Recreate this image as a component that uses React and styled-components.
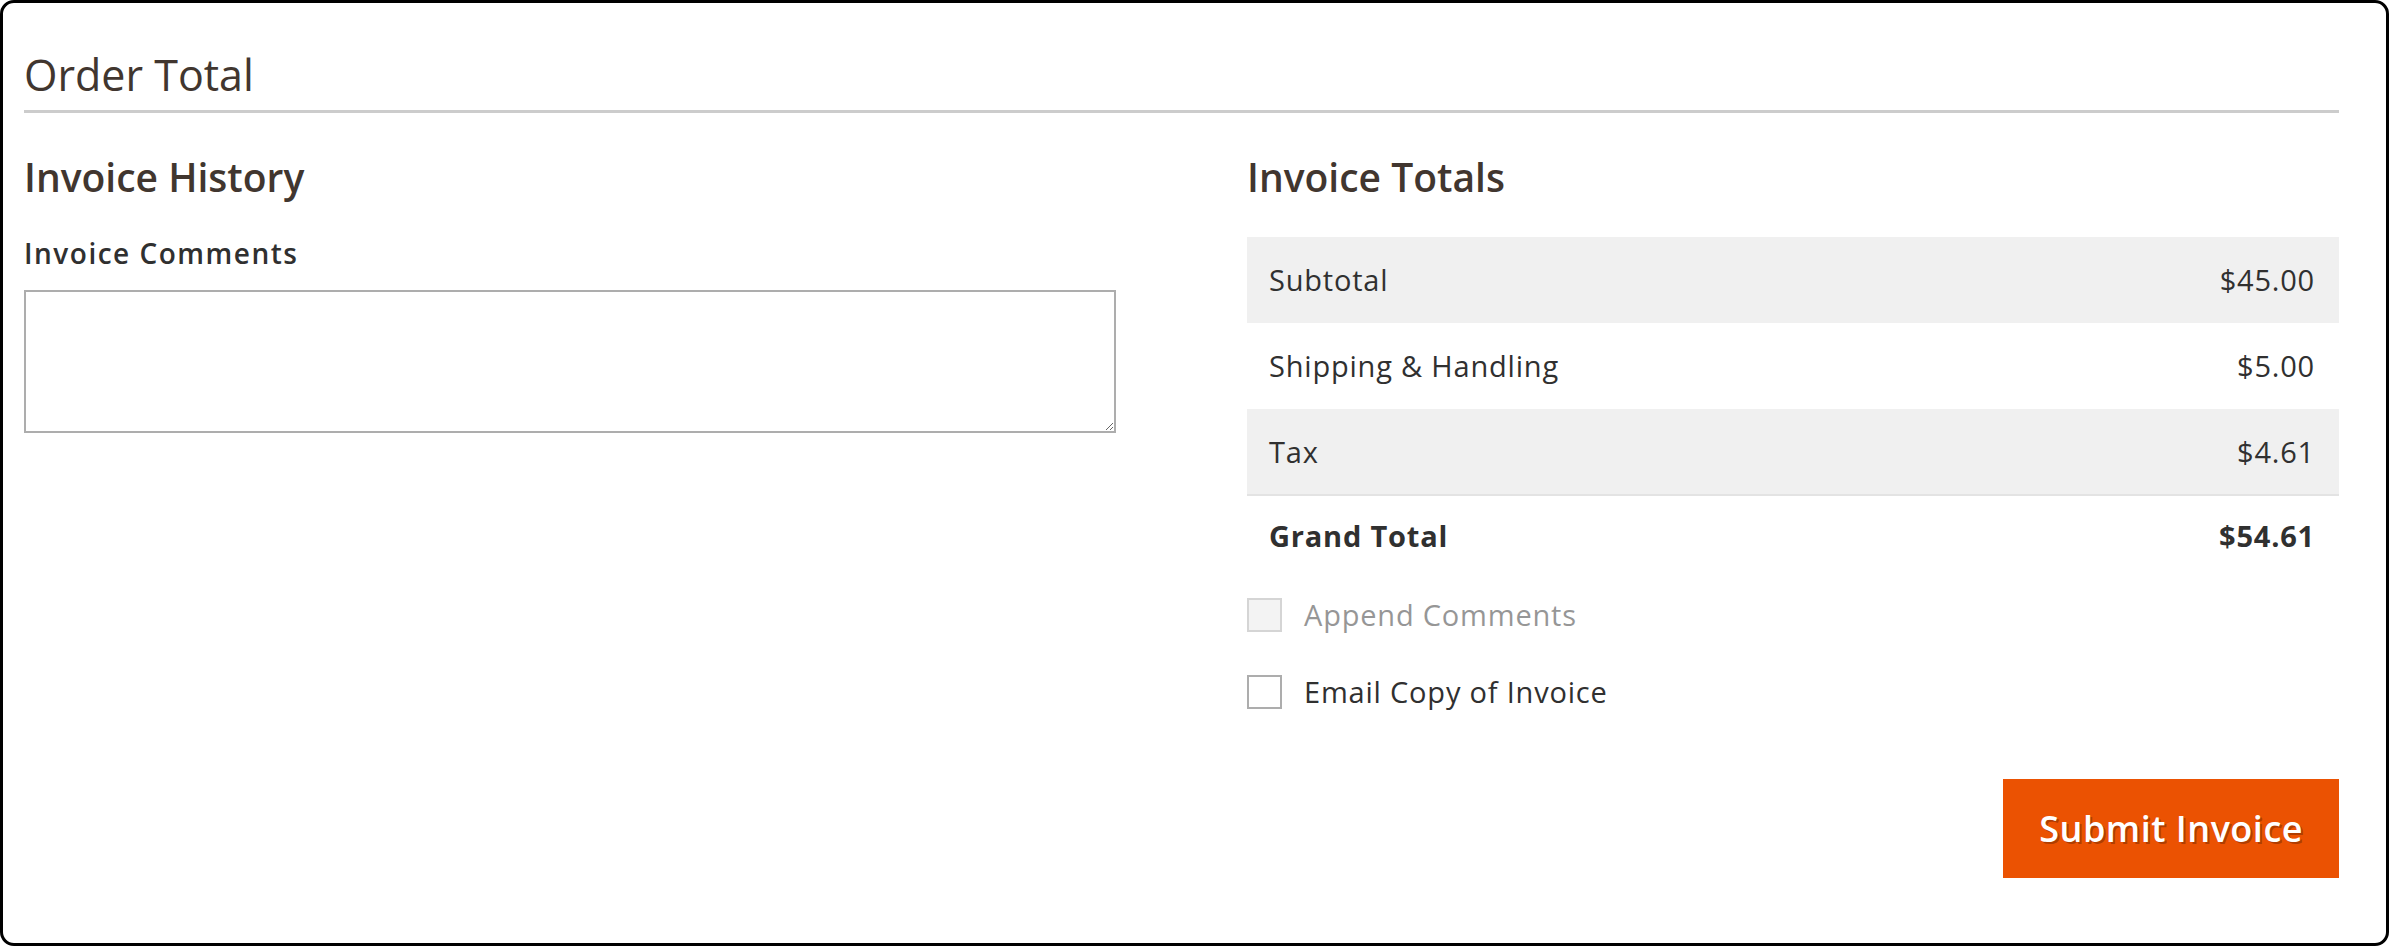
import styled, { createGlobalStyle } from 'styled-components';

const GlobalStyle = createGlobalStyle`
	html, body {
		margin: 0;
		padding: 0;
		background: #ffffff;
	}
	body {
		font-family: 'Open Sans', 'Noto Sans', 'Liberation Sans', sans-serif;
		color: #303030;
	}
	* {
		box-sizing: border-box;
	}
`;

const Frame = styled.div`
	height: 100vh;
	border: 3px solid #000000;
	border-radius: 14px;
	padding: 47px 47px 0 21px;
	overflow: hidden;
`;

const PageTitle = styled.h2`
	margin: 0;
	padding-bottom: 10px;
	border-bottom: 3px solid #cccccc;
	font-size: 43px;
	font-weight: 400;
	line-height: 50px;
	color: #41362f;
`;

const Columns = styled.div`
	display: grid;
	grid-template-columns: 1fr 1fr;
	column-gap: 131px;
	margin-top: 40px;
`;

const Column = styled.div`
	display: flex;
	flex-direction: column;
`;

const SectionTitle = styled.h3`
	margin: 0;
	font-size: 39px;
	font-weight: 600;
	line-height: 48px;
	color: #41362f;
`;

const FieldLabel = styled.label`
	margin-top: 33px;
	font-size: 28px;
	font-weight: 600;
	letter-spacing: 1.5px;
	line-height: 38px;
	color: #303030;
`;

const Comments = styled.textarea`
	margin-top: 18px;
	width: 100%;
	height: 143px;
	border: 2px solid #adadad;
	border-radius: 0;
	padding: 10px;
	font: inherit;
	resize: vertical;
	outline: none;
`;

const TotalsTable = styled.table`
	margin-top: 36px;
	width: 100%;
	border-collapse: collapse;
	font-size: 29px;
	letter-spacing: 0.8px;
	line-height: 40px;
	color: #303030;
`;

const TotalRow = styled.tr`
	background: ${(p) => (p.$shaded ? '#f0f0f0' : 'transparent')};
	td {
		height: ${(p) => (p.$grand ? '80px' : '86px')};
		font-weight: ${(p) => (p.$grand ? 700 : 400)};
		border-top: ${(p) => (p.$grand ? '2px solid #e3e3e3' : 'none')};
	}
`;

const LabelCell = styled.td`
	padding: 0 0 0 22px;
	text-align: left;
`;

const AmountCell = styled.td`
	padding: 0 24px 0 0;
	text-align: right;
`;

const Options = styled.div`
	display: flex;
	flex-direction: column;
	gap: 43px;
	margin-top: 23px;
`;

const OptionRow = styled.label`
	display: flex;
	align-items: center;
	gap: 22px;
	height: 34px;
	font-size: 29px;
	letter-spacing: 0.8px;
	line-height: 40px;
	color: #303030;
	opacity: ${(p) => (p.$disabled ? 0.5 : 1)};
`;

const Checkbox = styled.input`
	appearance: none;
	margin: 0;
	width: 35px;
	height: 34px;
	border: 2px solid #adadad;
	background: ${(p) => (p.disabled ? '#e9e9e9' : '#ffffff')};
	flex-shrink: 0;
`;

const Actions = styled.div`
	display: flex;
	justify-content: flex-end;
	margin-top: 70px;
`;

const PrimaryButton = styled.button`
	height: 99px;
	padding: 0 36px;
	border: none;
	border-radius: 0;
	background: #eb5202;
	color: #ffffff;
	font-family: inherit;
	font-size: 36px;
	font-weight: 600;
	letter-spacing: 0.5px;
	text-shadow: 2px 2px 0 rgba(0, 0, 0, 0.25);
	cursor: pointer;
	&:hover {
		background: #ba4000;
	}
`;

const totals = [
	{ label: 'Subtotal', amount: '$45.00' },
	{ label: 'Shipping & Handling', amount: '$5.00' },
	{ label: 'Tax', amount: '$4.61' },
];

const App = () => {
	return (
		<>
			<GlobalStyle />
			<Frame>
				<PageTitle>Order Total</PageTitle>
				<Columns>
					<Column>
						<SectionTitle>Invoice History</SectionTitle>
						<FieldLabel htmlFor='invoice-comment'>Invoice Comments</FieldLabel>
						<Comments id='invoice-comment' />
					</Column>
					<Column>
						<SectionTitle>Invoice Totals</SectionTitle>
						<TotalsTable>
							<tbody>
								{totals.map((row, i) => (
									<TotalRow key={row.label} $shaded={i % 2 === 0}>
										<LabelCell>{row.label}</LabelCell>
										<AmountCell>{row.amount}</AmountCell>
									</TotalRow>
								))}
								<TotalRow $grand>
									<LabelCell>Grand Total</LabelCell>
									<AmountCell>$54.61</AmountCell>
								</TotalRow>
							</tbody>
						</TotalsTable>
						<Options>
							<OptionRow $disabled>
								<Checkbox type='checkbox' disabled />
								Append Comments
							</OptionRow>
							<OptionRow>
								<Checkbox type='checkbox' />
								Email Copy of Invoice
							</OptionRow>
						</Options>
						<Actions>
							<PrimaryButton type='button'>Submit Invoice</PrimaryButton>
						</Actions>
					</Column>
				</Columns>
			</Frame>
		</>
	);
};

export default App;
